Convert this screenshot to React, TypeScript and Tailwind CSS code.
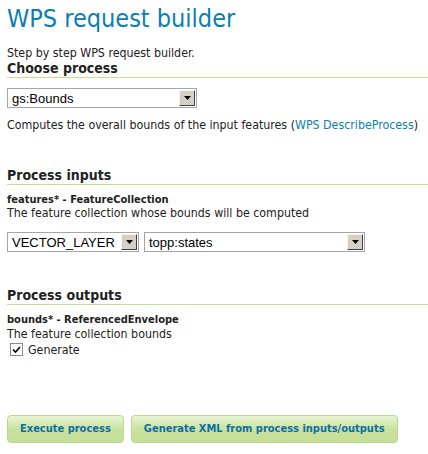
import React from 'react'

const Select = ({ value, className }: { value: string; className: string }) => {
    return (
        <div className={`flex items-stretch h-[20px] border border-[#a5a5a5] bg-white ${className}`}>
            <div className="flex-1 px-[4px] flex items-center text-[13px] text-black leading-none font-['Liberation_Sans',sans-serif]">{value}</div>
            <div className="w-[16px] m-[1px] bg-[#d4d0c8] border border-t-[#f4f4f4] border-l-[#f4f4f4] border-b-[#404040] border-r-[#404040] flex items-center justify-center">
                <svg width="7" height="4" viewBox="0 0 7 4"><path d="M0 0h7L3.5 4z" fill="#000" /></svg>
            </div>
        </div>
    )
}

const Heading = ({ children, className = '' }: { children: React.ReactNode; className?: string }) => (
    <h2 className={`text-[14px] font-bold text-[#222] leading-[16px] pb-[1px] border-b border-[#c3df9c] ${className}`}>{children}</h2>
)

const Button = ({ children }: { children: React.ReactNode }) => (
    <button className="h-[28px] px-[12px] rounded-[4px] border border-[#bcd98d] bg-gradient-to-b from-[#eaf5d6] via-[#c9e39e] to-[#c5df98] text-[#0d6ea5] text-[11px] font-bold">
        {children}
    </button>
)

export default function App() {
    return (
        <div className="w-[428px] h-[454px] overflow-hidden bg-white pl-[7px] font-['DejaVu_Sans_Condensed','DejaVu_Sans',sans-serif] text-[12.3px] text-[#222]">
            <h1 className="text-[25px] text-[#0a7fb4] leading-[30px] pt-[4px]">WPS request builder</h1>
            <p className="mt-[12px] leading-[14px]">Step by step WPS request builder.</p>
            <Heading>Choose process</Heading>
            <Select value="gs:Bounds" className="w-[190px] mt-[10px]" />
            <p className="mt-[10px] leading-[14px]">
                Computes the overall bounds of the input features (<span className="text-[#0a7fb4]">WPS DescribeProcess</span>)
            </p>
            <Heading className="mt-[35px]">Process inputs</Heading>
            <p className="mt-[8px] text-[11px] font-bold leading-[13px]">features* - FeatureCollection</p>
            <p className="leading-[14px]">The feature collection whose bounds will be computed</p>
            <div className="flex gap-[5px] mt-[12px]">
                <Select value="VECTOR_LAYER" className="w-[132px]" />
                <Select value="topp:states" className="w-[221px]" />
            </div>
            <Heading className="mt-[35px]">Process outputs</Heading>
            <p className="mt-[8px] text-[11px] font-bold leading-[13px]">bounds* - ReferencedEnvelope</p>
            <p className="mt-[1px] leading-[14px]">The feature collection bounds</p>
            <div className="flex items-center gap-[5px] mt-[2px] pl-[3px] h-[13px]">
                <span className="w-[13px] h-[13px] border border-[#8a8a8a] bg-white flex items-center justify-center">
                    <svg width="9" height="8" viewBox="0 0 9 8"><path d="M1 3.5l2.5 2.5L8 1" stroke="#000" strokeWidth="1.6" fill="none" /></svg>
                </span>
                <span className="leading-[14px]">Generate</span>
            </div>
            <div className="flex gap-[7px] mt-[59px]">
                <Button>Execute process</Button>
                <Button>Generate XML from process inputs/outputs</Button>
            </div>
        </div>
    )
}
